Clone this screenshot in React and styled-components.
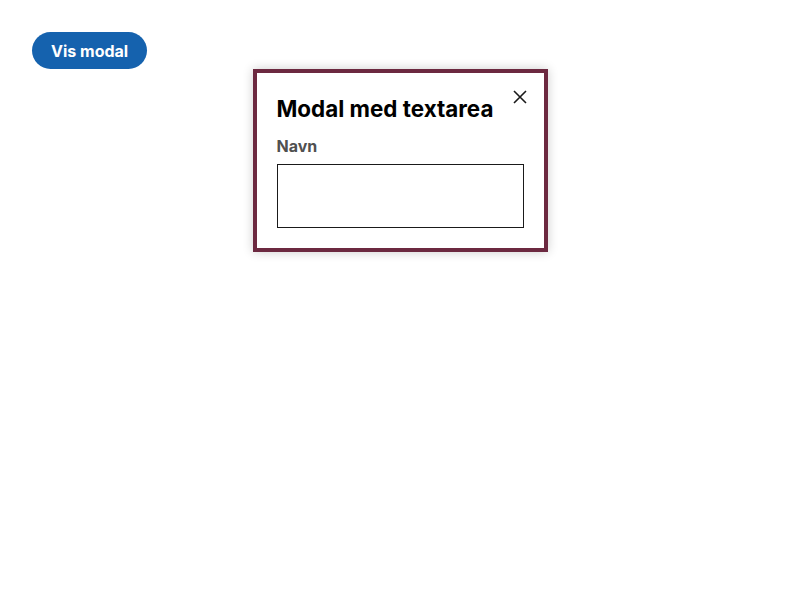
import React, { useState } from 'react'
import styled, { createGlobalStyle } from 'styled-components'

const GlobalStyle = createGlobalStyle`
  body {
    margin: 0;
    background: #ffffff;
    font-family: Inter, "Noto Sans", sans-serif;
  }
`

const Page = styled.div`
  padding: 32px;
`

const OpenButton = styled.button`
  display: block;
  height: 37px;
  padding: 0 19px;
  border: none;
  border-radius: 19px;
  background-color: #1562ae;
  color: #ffffff;
  font-family: Inter, sans-serif;
  font-size: 16px;
  font-weight: 700;
  cursor: pointer;
`

const Modal = styled.div`
  position: relative;
  box-sizing: border-box;
  width: 295px;
  margin: 0 auto;
  padding: 20px;
  border: 4px solid #6c2940;
  background: #ffffff;
  box-shadow: 0 0 10px rgba(0, 0, 0, 0.2);
`

const CloseButton = styled.button`
  position: absolute;
  top: 8px;
  right: 8px;
  width: 32px;
  height: 32px;
  padding: 0;
  border: none;
  background: transparent;
  display: flex;
  align-items: center;
  justify-content: center;
  cursor: pointer;
`

const Title = styled.h1`
  margin: 0 0 9px;
  font-size: 22.4px;
  line-height: 32px;
  font-weight: 700;
  color: #000000;
`

const Label = styled.label`
  display: block;
  margin-bottom: 6px;
  font-size: 16px;
  line-height: 24px;
  font-weight: 700;
  color: #505050;
`

const TextArea = styled.textarea`
  display: block;
  box-sizing: border-box;
  width: 100%;
  height: 64px;
  margin: 0;
  border: 1px solid #1a1a1a;
  border-radius: 0;
  resize: none;
  font-family: Inter, sans-serif;
  font-size: 16px;
`

const App = () => {
  const [open, setOpen] = useState(true)

  return (
    <>
      <GlobalStyle />
      <Page>
        <OpenButton onClick={() => setOpen(true)}>Vis modal</OpenButton>
        {open && (
          <Modal>
            <CloseButton onClick={() => setOpen(false)} aria-label="Lukk">
              <svg width="14" height="14" viewBox="0 0 14 14">
                <path d="M1 1L13 13M13 1L1 13" stroke="#1a1a1a" strokeWidth="1.6" />
              </svg>
            </CloseButton>
            <Title>Modal med textarea</Title>
            <Label htmlFor="navn">Navn</Label>
            <TextArea id="navn" />
          </Modal>
        )}
      </Page>
    </>
  )
}

export default App
